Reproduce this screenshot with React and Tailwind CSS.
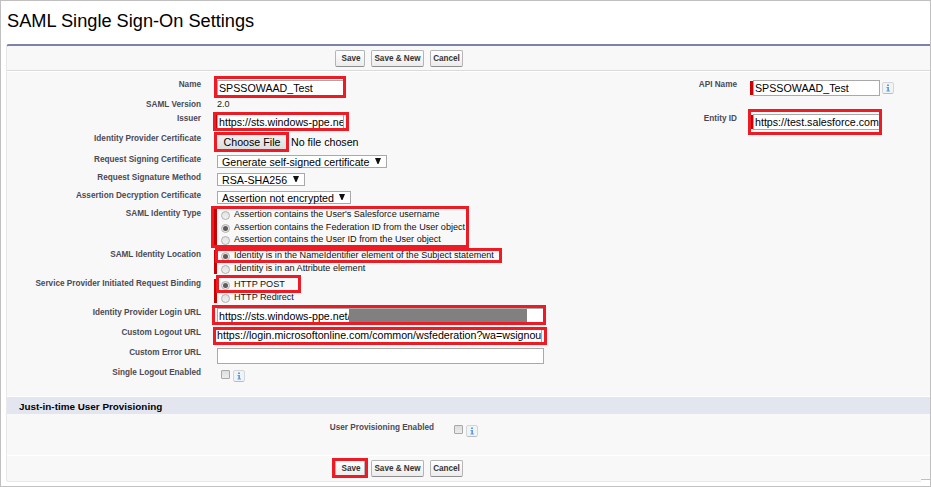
import React from "react";
import clsx from "clsx";

function ActionButton({ children, className }) {
  return (
    <button
      className={clsx(
        "box-border h-[17px] shrink-0 whitespace-nowrap rounded-[2px] border border-[#b5b5b5] border-b-[#8f8f8f] bg-linear-to-b from-white to-[#ececec] text-center text-[8.15px] leading-[14px] font-bold text-[#333333]",
        className
      )}
    >
      {children}
    </button>
  );
}

function ButtonBar({ className }) {
  return (
    <div className={clsx("flex pl-[328px]", className)}>
      <ActionButton className="w-[30px] pl-[2px]">Save</ActionButton>
      <ActionButton className="ml-[6px] w-[53px]">Save &amp; New</ActionButton>
      <ActionButton className="ml-[6px] w-[33px]">Cancel</ActionButton>
    </div>
  );
}

function Label({ children, className }) {
  return (
    <div
      className={clsx(
        "shrink-0 whitespace-nowrap pt-[1px] text-right text-[8.2px] leading-[14px] font-bold text-[#4a4a56]",
        className
      )}
    >
      {children}
    </div>
  );
}

function Row({ label, className, control, children }) {
  return (
    <div className={clsx("flex shrink-0", className)}>
      <Label className="w-[194px]">{label}</Label>
      <div className={clsx("ml-[13px] w-[386px] shrink-0 pl-[3px]", control)}>{children}</div>
    </div>
  );
}

function TextBox({ value = "", className }) {
  return (
    <div
      className={clsx(
        "box-border h-4 overflow-hidden whitespace-nowrap border border-[#a9a9a9] bg-white pl-[1px] text-[10.67px] leading-[14px] text-black",
        className
      )}
    >
      {value}
    </div>
  );
}

function Select({ children, className }) {
  return (
    <div
      className={clsx(
        "box-border flex h-[13px] items-center justify-between whitespace-nowrap border border-[#a9a9a9] bg-white pr-[5px] pl-[4px] text-[10.67px] leading-[12px] text-black",
        className
      )}
    >
      <span className="pt-[1px]">{children}</span>
      <svg width="6" height="6" viewBox="0 0 6 6" className="-mt-[2px]">
        <path d="M0 0H6L3.5 6H2.5Z" fill="#111111" />
      </svg>
    </div>
  );
}

function Radio({ checked, children, className }) {
  return (
    <div className={clsx("flex shrink-0 items-start pl-[4px]", className)}>
      <span className="mt-[2px] box-border flex size-[9px] shrink-0 items-center justify-center rounded-full border border-[#b0b0b0] bg-linear-to-b from-[#e2e2e2] to-[#f0f0f0]">
        {checked && <span className="size-[5px] rounded-full bg-[#5c5c5c]" />}
      </span>
      <span className="ml-[4px] whitespace-nowrap text-[9.08px] leading-[10px] text-[#111111]">{children}</span>
    </div>
  );
}

function RequiredGroup({ className, children }) {
  return <div className={clsx("-ml-[3px] flex flex-col border-l-3 border-[#cc0000]", className)}>{children}</div>;
}

function Checkbox() {
  return (
    <span className="box-border size-[9px] shrink-0 rounded-[1px] border border-[#a8a8a8] bg-linear-to-b from-[#dedede] to-[#ececec]" />
  );
}

function InfoIcon({ className }) {
  return (
    <svg width="12" height="12" viewBox="0 0 12 12" className={clsx("shrink-0", className)}>
      <rect x="0.5" y="0.5" width="11" height="11" rx="1.5" fill="#f1f3f5" stroke="#d3d6d9" />
      <path d="M1.5 11.5H10.5" stroke="#b9bcc0" />
      <path d="M5 2.5H7V4H5ZM4.5 5H7V8.5H8V9.5H4.5V8.5H5.3V6H4.5Z" fill="#5b9fe0" />
    </svg>
  );
}

function Highlight({ className }) {
  return <div className={clsx("pointer-events-none absolute box-border border-3 border-[#ed1c24]", className)} />;
}

export default function App() {
  return (
    <div className="relative box-border flex h-[487px] w-[931px] flex-col overflow-hidden border border-[#c0c0c0] bg-white font-['Liberation_Sans',Arial,sans-serif]">
      <h1 className="h-[43px] shrink-0 pt-[9px] pl-[6px] text-[18.22px] leading-[22px] text-black">
        SAML Single Sign-On Settings
      </h1>

      <div className="ml-[5px] flex h-[438px] shrink-0 flex-col rounded-l-[3px] border-t-2 border-b border-l border-t-[#7b84a6] border-b-[#e8e8e8] border-l-[#e8e8e8] bg-[#f8f8f8]">
        <ButtonBar className="h-[25px] shrink-0 border-b border-[#dadada] pt-[4px]" />

        <div className="flex h-[326px] shrink-0 flex-col border-y border-white pt-[5px]">
          <div className="flex h-5 shrink-0">
            <Row label="Name" control="pt-[3px]">
              <TextBox value="SPSSOWAAD_Test" className="w-[127px]" />
            </Row>
            <Label className="w-[137px]">API Name</Label>
            <div className="ml-[13px] flex pt-[3px]">
              <span className="mt-[1px] h-[14px] w-[3px] bg-[#cc0000]" />
              <TextBox value="SPSSOWAAD_Test" className="w-[127px]" />
              <InfoIcon className="mt-[2px] ml-[2px]" />
            </div>
          </div>
          <Row label="SAML Version" className="h-[14px]">
            <span className="block text-[9.05px] leading-[15px] text-[#222222]">2.0</span>
          </Row>
          <div className="flex h-5 shrink-0">
            <Row label="Issuer" control="pt-[3px]">
              <RequiredGroup>
                <TextBox value="https://sts.windows-ppe.net" className="w-[127px]" />
              </RequiredGroup>
            </Row>
            <Label className="w-[137px]">Entity ID</Label>
            <div className="ml-[13px] flex pt-[3px]">
              <span className="mt-[1px] h-[14px] w-[3px] bg-[#cc0000]" />
              <TextBox value="https://test.salesforce.com" className="w-[127px]" />
            </div>
          </div>
          <Row label="Identity Provider Certificate" className="h-[21px]" control="pt-[4px]">
            <div className="flex items-center text-[10.67px] leading-[14px] text-black">
              <span className="box-border h-[14px] w-[69px] bg-linear-to-b from-[#f2f2f2] to-[#dddddd] pl-[1px] text-center">
                Choose File
              </span>
              <span className="ml-[5px]">No file chosen</span>
            </div>
          </Row>
          <Row label="Request Signing Certificate" className="h-[18px]" control="pt-[3px]">
            <Select className="w-[170px]">Generate self-signed certificate</Select>
          </Row>
          <Row label="Request Signature Method" className="h-[18px]" control="pt-[3px]">
            <Select className="w-[88px]">RSA-SHA256</Select>
          </Row>
          <Row label="Assertion Decryption Certificate" className="h-[18px]" control="pt-[3px]">
            <Select className="w-[134px]">Assertion not encrypted</Select>
          </Row>
          <Row label="SAML Identity Type" className="h-[41px]" control="pt-[3px]">
            <RequiredGroup className="h-[37px]">
              <Radio className="h-[13px]">Assertion contains the User's Salesforce username</Radio>
              <Radio checked className="h-[12px]">
                Assertion contains the Federation ID from the User object
              </Radio>
              <Radio className="h-[12px]">Assertion contains the User ID from the User object</Radio>
            </RequiredGroup>
          </Row>
          <Row label="SAML Identity Location" className="h-[29px]" control="pt-[3px]">
            <RequiredGroup className="h-[24px]">
              <Radio checked className="h-[13px]">
                Identity is in the NameIdentifier element of the Subject statement
              </Radio>
              <Radio className="h-[11px]">Identity is in an Attribute element</Radio>
            </RequiredGroup>
          </Row>
          <Row label="Service Provider Initiated Request Binding" className="h-[29px]" control="pt-[3px]">
            <RequiredGroup className="h-[24px]">
              <Radio checked className="h-[13px]">
                HTTP POST
              </Radio>
              <Radio className="h-[11px]">HTTP Redirect</Radio>
            </RequiredGroup>
          </Row>
          <Row label="Identity Provider Login URL" className="h-5" control="pt-[3px]">
            <div className="box-border flex h-4 w-[327px] overflow-hidden border border-[#a9a9a9] bg-white pl-[1px] text-[10.67px] leading-[14px] text-black">
              <span className="w-[130px] shrink-0 overflow-hidden whitespace-nowrap">https://sts.windows-ppe.net/</span>
              <span className="h-[14px] w-[178px] shrink-0 bg-[#808080]" />
            </div>
          </Row>
          <Row label="Custom Logout URL" className="h-5" control="pt-[2px]">
            <TextBox
              value="https://login.microsoftonline.com/common/wsfederation?wa=wsignout1.0"
              className="-ml-[1px] w-[326px] border-l-0 pl-0 text-[#333333]"
            />
          </Row>
          <Row label="Custom Error URL" className="h-5" control="pt-[3px]">
            <TextBox className="w-[327px]" />
          </Row>
          <Row label="Single Logout Enabled" className="h-[18px]" control="flex items-start pt-[5px]">
            <span className="flex pl-[4px]">
              <Checkbox />
              <InfoIcon className="ml-[3px]" />
            </span>
          </Row>
        </div>

        <h2 className="h-[17px] shrink-0 bg-[#e3e5ef] pl-[12px] text-[9.88px] leading-[19px] font-bold text-black">
          Just-in-time User Provisioning
        </h2>
        <div className="flex h-[42px] shrink-0 border-b border-white pt-[6px]">
          <Label className="w-[427px]">User Provisioning Enabled</Label>
          <div className="ml-[20px] flex items-start pt-[5px]">
            <Checkbox />
            <InfoIcon className="ml-[3px]" />
          </div>
        </div>
        <ButtonBar className="pt-[4px]" />
      </div>

      <div className="absolute right-0 bottom-0 h-[7px] w-[9px] border-t border-[#c0c0c0] bg-white" />

      {/* Callouts around the fields to fill in */}
      <Highlight className="top-[75px] left-[213px] h-[22px] w-[132px]" />
      <Highlight className="top-[111px] left-[212px] h-[19px] w-[136px]" />
      <Highlight className="top-[131px] left-[213px] h-[20px] w-[75px]" />
      <Highlight className="top-[108px] left-[747px] h-[26px] w-[134px]" />
      <Highlight className="top-[205px] left-[210px] h-[42px] w-[258px]" />
      <Highlight className="top-[247px] left-[214px] h-[15px] w-[287px]" />
      <Highlight className="top-[274px] left-[215px] h-[18px] w-[85px]" />
      <Highlight className="top-[304px] left-[211px] h-[20px] w-[334px]" />
      <Highlight className="top-[326px] left-[212px] h-[18px] w-[334px]" />
      <Highlight className="top-[457px] left-[331px] h-[20px] w-[36px]" />
    </div>
  );
}
